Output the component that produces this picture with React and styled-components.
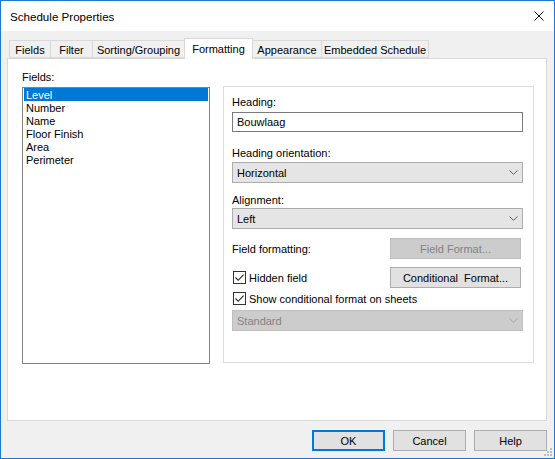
import React from "react";
import styled, { createGlobalStyle } from "styled-components";

const GlobalStyle = createGlobalStyle`
  html, body {
    margin: 0;
    padding: 0;
    background: #ffffff;
  }
  * {
    box-sizing: border-box;
  }
`;

// Whole dialog window with the blue accent border
const Window = styled.div`
  position: relative;
  width: 555px;
  height: 459px;
  border: 1px solid #1a79d0;
  background: #f0f0f0;
  font-family: "Liberation Sans", Arial, sans-serif;
  font-size: 11px;
  color: #000000;
  display: flex;
  flex-direction: column;
  overflow: hidden;
`;

const TitleBar = styled.div`
  height: 30px;
  background: #ffffff;
  display: flex;
  align-items: center;
  justify-content: space-between;
  padding-left: 9px;
`;

const Title = styled.div`
  font-size: 11.6px;
  line-height: 15px;
  padding-top: 1px;
`;

const CloseIcon = styled.svg`
  width: 10px;
  height: 10px;
  margin-right: 10px;
  margin-top: -1px;
`;

const Body = styled.div`
  flex: 1;
  display: flex;
  flex-direction: column;
  padding: 7px 7px 0 6px;
`;

const TabStrip = styled.div`
  display: flex;
  align-items: flex-end;
  height: 20px;
  padding-left: 2px;
  position: relative;
  z-index: 1;
`;

const Tab = styled.div`
  width: ${({ w }) => w}px;
  height: ${({ active }) => (active ? 21 : 18)}px;
  margin-bottom: ${({ active }) => (active ? -1 : 0)}px;
  border: 1px solid #d9d9d9;
  border-bottom: ${({ active }) => (active ? "none" : "1px solid #d9d9d9")};
  margin-left: -1px;
  background: ${({ active }) => (active ? "#ffffff" : "#f0f0f0")};
  display: flex;
  align-items: center;
  justify-content: center;
  white-space: nowrap;
  line-height: 15px;
  padding-top: ${({ active }) => (active ? 0 : 2)}px;
  position: relative;
  z-index: ${({ active }) => (active ? 2 : 1)};
  &:first-child {
    margin-left: 0;
  }
`;

const TabPanel = styled.div`
  height: 363px;
  background: #ffffff;
  border: 1px solid #d9d9d9;
  display: flex;
  align-items: flex-start;
  padding: 11px 12px 0 14px;
`;

const FieldsColumn = styled.div`
  width: 188px;
  display: flex;
  flex-direction: column;
`;

const Label = styled.div`
  line-height: 15px;
  height: 15px;
  white-space: nowrap;
  margin-top: ${({ mt }) => mt || 0}px;
`;

const ListBox = styled.div`
  margin-top: 2px;
  height: 277px;
  border: 1px solid #828282;
  background: #ffffff;
  padding: 0 1px;
`;

const ListItem = styled.div`
  height: 13px;
  line-height: 13px;
  padding: 1px 0 0 2px;
  white-space: nowrap;
  background: ${({ selected }) => (selected ? "#0078d7" : "transparent")};
  color: ${({ selected }) => (selected ? "#ffffff" : "#000000")};
`;

const GroupBox = styled.div`
  margin-top: 16px;
  margin-left: 13px;
  width: 311px;
  height: 277px;
  border: 1px solid #dcdcdc;
  padding: 8px 10px 0 8px;
  display: flex;
  flex-direction: column;
`;

const TextInput = styled.div`
  margin-top: 2px;
  height: 20px;
  border: 1px solid #7a7a7a;
  background: #ffffff;
  display: flex;
  align-items: center;
  padding: 1px 0 0 4px;
  line-height: 15px;
`;

const Select = styled.div`
  margin-top: ${({ mt }) => mt || 0}px;
  height: 21px;
  border: 1px solid ${({ disabled }) => (disabled ? "#bfbfbf" : "#acacac")};
  background: ${({ disabled }) => (disabled ? "#cccccc" : "#e5e5e5")};
  color: ${({ disabled }) => (disabled ? "#838383" : "#000000")};
  display: flex;
  align-items: center;
  justify-content: space-between;
  padding: 1px 4px 0 4px;
  line-height: 15px;
`;

const Chevron = styled.svg`
  width: 9px;
  height: 5px;
  margin-top: -1px;
`;

const Row = styled.div`
  margin-top: ${({ mt }) => mt || 0}px;
  height: ${({ h }) => h}px;
  display: flex;
  align-items: center;
  justify-content: space-between;
`;

const RowLabel = styled.div`
  line-height: 15px;
  padding-top: 1px;
  white-space: nowrap;
`;

const Button = styled.div`
  width: ${({ w }) => w}px;
  height: 21px;
  margin-right: ${({ mr }) => mr || 0}px;
  border: 1px solid ${({ disabled }) => (disabled ? "#bfbfbf" : "#adadad")};
  background: ${({ disabled }) => (disabled ? "#cccccc" : "#e1e1e1")};
  color: ${({ disabled }) => (disabled ? "#838383" : "#000000")};
  display: flex;
  align-items: center;
  justify-content: center;
  white-space: pre;
  line-height: 15px;
  padding-top: 1px;
  ${({ primary }) =>
    primary &&
    `
    border-color: #0078d7;
    box-shadow: inset 0 0 0 1px #0078d7;
  `}
`;

const CheckRow = styled.label`
  display: flex;
  align-items: center;
  gap: 3px;
  line-height: 15px;
  white-space: nowrap;
  margin-left: 1px;
`;

const CheckText = styled.span`
  padding-top: 2px;
`;

const CheckBox = styled.span`
  width: 13px;
  height: 13px;
  border: 1px solid #333333;
  background: #ffffff;
  display: flex;
  align-items: center;
  justify-content: center;
`;

const Footer = styled.div`
  margin-top: 9px;
  display: flex;
  justify-content: flex-end;
  gap: 8px;
`;

const Grip = styled.svg`
  position: absolute;
  right: 1px;
  bottom: 1px;
  width: 10px;
  height: 10px;
`;

function Check() {
  return (
    <CheckBox>
      <svg width="11" height="11" viewBox="0 0 11 11">
        <path d="M1.5 5.5 L4.2 8.3 L9.6 2.6" fill="none" stroke="#222" strokeWidth="1.1" />
      </svg>
    </CheckBox>
  );
}

function DownArrow({ color }) {
  return (
    <Chevron viewBox="0 0 9 5">
      <path d="M0.5 0.5 L4.5 4.3 L8.5 0.5" fill="none" stroke={color} strokeWidth="1" />
    </Chevron>
  );
}

const tabs = [
  { label: "Fields", w: 42 },
  { label: "Filter", w: 43 },
  { label: "Sorting/Grouping", w: 93 },
  { label: "Formatting", w: 69, active: true },
  { label: "Appearance", w: 70 },
  { label: "Embedded Schedule", w: 108 },
];

const fields = ["Level", "Number", "Name", "Floor Finish", "Area", "Perimeter"];

export default function App() {
  return (
    <>
      <GlobalStyle />
      <Window>
        <TitleBar>
          <Title>Schedule Properties</Title>
          <CloseIcon viewBox="0 0 10 10">
            <path d="M0.5 0.5 L9.5 9.5 M9.5 0.5 L0.5 9.5" stroke="#111" strokeWidth="1" />
          </CloseIcon>
        </TitleBar>
        <Body>
          <TabStrip>
            {tabs.map((t) => (
              <Tab key={t.label} w={t.w} active={t.active}>
                {t.label}
              </Tab>
            ))}
          </TabStrip>
          <TabPanel>
            <FieldsColumn>
              <Label>Fields:</Label>
              <ListBox>
                {fields.map((f, i) => (
                  <ListItem key={f} selected={i === 0}>
                    {f}
                  </ListItem>
                ))}
              </ListBox>
            </FieldsColumn>
            <GroupBox>
              <Label>Heading:</Label>
              <TextInput>Bouwlaag</TextInput>
              <Label mt={14}>Heading orientation:</Label>
              <Select mt={1}>
                <span>Horizontal</span>
                <DownArrow color="#606060" />
              </Select>
              <Label mt={10}>Alignment:</Label>
              <Select>
                <span>Left</span>
                <DownArrow color="#606060" />
              </Select>
              <Row mt={9} h={21}>
                <RowLabel>Field formatting:</RowLabel>
                <Button w={131} mr={2} disabled>
                  Field Format...
                </Button>
              </Row>
              <Row mt={8} h={21}>
                <CheckRow>
                  <Check />
                  <CheckText>Hidden field</CheckText>
                </CheckRow>
                <Button w={131} mr={2}>
                  {"Conditional  Format..."}
                </Button>
              </Row>
              <Row mt={3} h={15}>
                <CheckRow>
                  <Check />
                  <CheckText>Show conditional format on sheets</CheckText>
                </CheckRow>
              </Row>
              <Select mt={4} disabled>
                <span>Standard</span>
                <DownArrow color="#a8a8a8" />
              </Select>
            </GroupBox>
          </TabPanel>
          <Footer>
            <Button w={73} primary>
              OK
            </Button>
            <Button w={73}>Cancel</Button>
            <Button w={73}>Help</Button>
          </Footer>
        </Body>
        <Grip viewBox="0 0 10 10">
          <rect x="7" y="1" width="2" height="2" fill="#bdbdbd" />
          <rect x="4" y="4" width="2" height="2" fill="#bdbdbd" />
          <rect x="7" y="4" width="2" height="2" fill="#bdbdbd" />
          <rect x="1" y="7" width="2" height="2" fill="#bdbdbd" />
          <rect x="4" y="7" width="2" height="2" fill="#bdbdbd" />
          <rect x="7" y="7" width="2" height="2" fill="#bdbdbd" />
        </Grip>
      </Window>
    </>
  );
}
